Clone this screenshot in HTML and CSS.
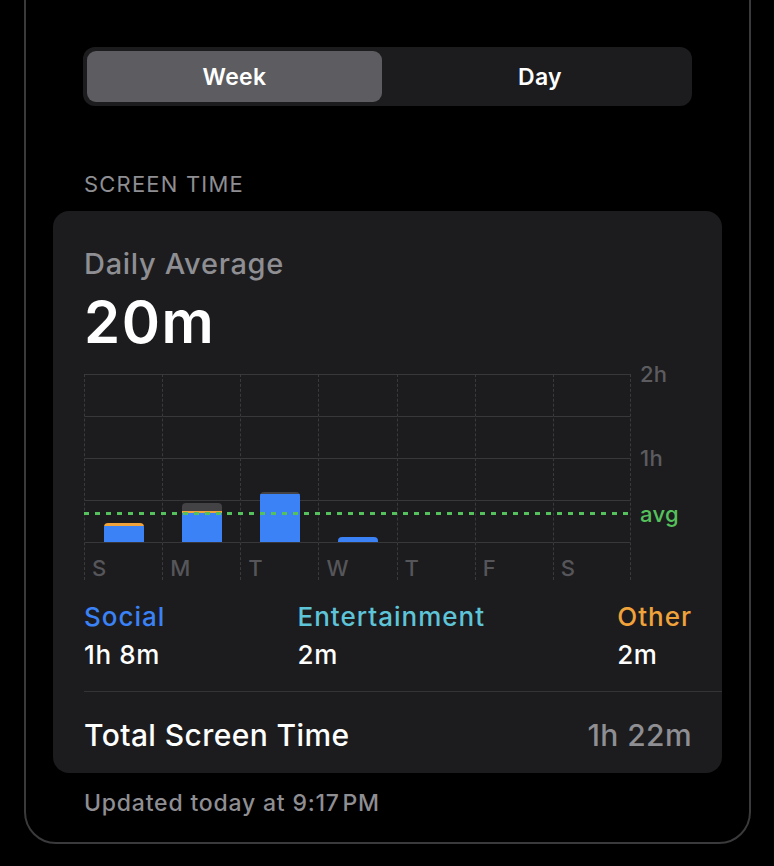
FILE: index.html
```html
<!DOCTYPE html>
<html lang="en">
<head>
<meta charset="utf-8">
<title>Screen Time</title>
<link rel="stylesheet" href="styles.css">
</head>
<body>
<div class="frame">
  <div class="segmented">
    <div class="seg seg-active">Week</div>
    <div class="seg seg-day">Day</div>
  </div>

  <div class="section-label">SCREEN TIME</div>

  <div class="card">
    <div class="avg-title">Daily Average</div>
    <div class="avg-value">20m</div>

    <div class="chart">
      <div class="plot">
        <div class="cols">
          <div class="col">
            <div class="barzone">
              <div class="bar">
                <div class="seg-other" style="height:3px"></div>
                <div class="seg-social" style="height:16px"></div>
              </div>
            </div>
            <div class="day">S</div>
          </div>
          <div class="col">
            <div class="barzone">
              <div class="bar">
                <div class="seg-gray" style="height:8px"></div>
                <div class="seg-other" style="height:2px"></div>
                <div class="seg-social" style="height:29px"></div>
              </div>
            </div>
            <div class="day">M</div>
          </div>
          <div class="col">
            <div class="barzone">
              <div class="bar">
                <div class="seg-gray" style="height:2px"></div>
                <div class="seg-social" style="height:48px"></div>
              </div>
            </div>
            <div class="day">T</div>
          </div>
          <div class="col">
            <div class="barzone">
              <div class="bar">
                <div class="seg-social" style="height:5px"></div>
              </div>
            </div>
            <div class="day">W</div>
          </div>
          <div class="col">
            <div class="barzone"></div>
            <div class="day">T</div>
          </div>
          <div class="col">
            <div class="barzone"></div>
            <div class="day">F</div>
          </div>
          <div class="col col-last">
            <div class="barzone"></div>
            <div class="day">S</div>
          </div>
        </div>
        <div class="avg-line"></div>
      </div>
      <div class="axis">
        <div class="tick">2h</div>
        <div class="tick tick-1h">1h</div>
        <div class="tick tick-avg">avg</div>
      </div>
    </div>

    <div class="legend">
      <div class="legend-item">
        <div class="legend-name c-social">Social</div>
        <div class="legend-value">1h 8m</div>
      </div>
      <div class="legend-item">
        <div class="legend-name c-ent">Entertainment</div>
        <div class="legend-value">2m</div>
      </div>
      <div class="legend-item">
        <div class="legend-name c-other">Other</div>
        <div class="legend-value">2m</div>
      </div>
    </div>

    <div class="total-row">
      <div class="total-label">Total Screen Time</div>
      <div class="total-value">1h 22m</div>
    </div>
  </div>

  <div class="updated">Updated today at 9:17&#8202;PM</div>
</div>
</body>
</html>
```

FILE: styles.css
```css
* { box-sizing: border-box; }

html, body {
  margin: 0;
  padding: 0;
  background: #000;
  overflow: hidden;
}

body {
  font-family: Inter, "Open Sans", "Liberation Sans", sans-serif;
  color: #fff;
  height: 866px;
}

.frame {
  margin: -40px 0 0 24px;
  width: 727px;
  border: 2px solid #3a3a3c;
  border-radius: 0 0 32px 32px;
  padding: 85px 27px 25px 27px;
}

.segmented {
  margin: 0 30px;
  height: 59px;
  background: #1c1c1e;
  border-radius: 12px;
  padding: 4px;
  display: flex;
}

.seg {
  flex: 1;
  display: flex;
  align-items: center;
  justify-content: center;
  font-size: 23px;
  font-weight: 600;
  color: #fff;
  border-radius: 9px;
  letter-spacing: 0.3px;
}

.seg-active {
  background: #5d5d61;
  flex: 0 0 295px;
}

.seg-day { padding-left: 10px; }

.section-label {
  margin-top: 64px;
  margin-bottom: 13px;
  padding-left: 31px;
  font-size: 22px;
  line-height: 28px;
  color: #8e8e93;
  letter-spacing: 1.2px;
}

.card {
  background: #1c1c1e;
  border-radius: 16px;
  padding: 35px 30px 0 31px;
}

.avg-title {
  font-size: 29px;
  line-height: 36px;
  color: #8e8e93;
  font-weight: 500;
  letter-spacing: 0.7px;
}

.avg-value {
  margin-top: 7px;
  font-size: 58px;
  line-height: 66px;
  font-weight: 600;
  letter-spacing: 1.5px;
}

.chart {
  margin-top: 19px;
  display: flex;
}

.plot {
  position: relative;
  width: 547px;
}

.cols {
  display: grid;
  grid-template-columns: repeat(7, 1fr);
}

.col {
  border-left: 1px dashed #3a3a3c;
  display: flex;
  flex-direction: column;
}

.col-last {
  border-right: 1px dashed #3a3a3c;
}

.barzone {
  height: 169px;
  background-image: linear-gradient(#38383a 1px, transparent 1px);
  background-size: 100% 42px;
  background-repeat: repeat-y;
  display: flex;
  align-items: flex-end;
  justify-content: center;
  padding-bottom: 1px;
}

.bar {
  width: 40px;
  border-radius: 4px 4px 0 0;
  overflow: hidden;
  display: flex;
  flex-direction: column;
}

.seg-social { background: #3a82f6; }
.seg-other { background: #f0a23b; }
.seg-gray { background: #434346; }

.day {
  height: 37px;
  padding: 11px 0 0 7px;
  font-size: 22px;
  line-height: 28px;
  font-weight: 500;
  color: #56565a;
}

.avg-line {
  position: absolute;
  left: 0;
  right: 0;
  top: 138px;
  height: 3px;
  background-image: repeating-linear-gradient(to right, #55c15c 0 5px, transparent 5px 11px);
}

.axis {
  margin-left: 9px;
  margin-top: -14px;
  display: flex;
  flex-direction: column;
}

.tick {
  height: 28px;
  font-size: 22px;
  line-height: 28px;
  font-weight: 500;
  color: #5c5c60;
  letter-spacing: 0.3px;
}

.tick-1h { margin-top: 56px; }

.tick-avg {
  margin-top: 28px;
  color: #55c15c;
}

.legend {
  margin-top: 21px;
  display: flex;
  justify-content: space-between;
  padding-bottom: 20px;
  border-bottom: 1px solid #343436;
  margin-right: -30px;
  padding-right: 30px;
}

.legend-name {
  font-size: 26px;
  line-height: 32px;
  font-weight: 500;
  letter-spacing: 1px;
}

.legend-value {
  margin-top: 6px;
  font-size: 26px;
  line-height: 32px;
  font-weight: 500;
  color: #fff;
  letter-spacing: 0.6px;
}

.c-social { color: #3a82f6; }
.c-ent { color: #5ec4d8; }
.c-other { color: #f0a23b; }

.total-row {
  display: flex;
  justify-content: space-between;
  padding: 25px 0 20px 0;
  font-size: 30px;
  line-height: 36px;
  font-weight: 500;
  letter-spacing: 0.4px;
}

.total-value { color: #8e8e93; }

.updated {
  margin-top: 16px;
  padding-left: 31px;
  font-size: 23px;
  line-height: 28px;
  color: #8e8e93;
  font-weight: 500;
  letter-spacing: 0.8px;
}
```
